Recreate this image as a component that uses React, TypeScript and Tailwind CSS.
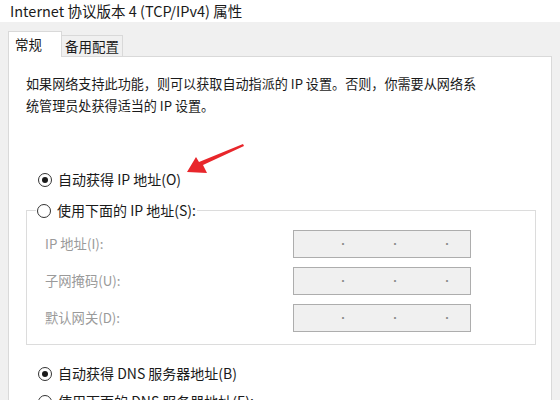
import React from "react";

const font = { fontFamily: '"Noto Sans CJK SC", "Noto Sans", sans-serif' };

const Radio = ({ checked }: { checked?: boolean }) => (
  <span className="w-[14px] h-[14px] rounded-full border border-[#333333] bg-white flex items-center justify-center flex-shrink-0">
    {checked && <span className="w-[6px] h-[6px] rounded-full bg-[#1a1a1a]" />}
  </span>
);

const RadioRow = ({ checked, label }: { checked?: boolean; label: string }) => (
  <div className="flex items-center gap-[6px] h-[20px] text-[14px] text-[#1a1a1a]">
    <Radio checked={checked} />
    <span>{label}</span>
  </div>
);

const IpField = () => (
  <div className="w-[178px] h-[28px] bg-[#f0f0f0] border border-[#adadad] flex items-center text-[#8a8a8a] text-[10px] leading-none">
    <span className="ml-[44px]">·</span>
    <span className="ml-[42px]">·</span>
    <span className="ml-[42px]">·</span>
  </div>
);

const fields = ["IP 地址(I):", "子网掩码(U):", "默认网关(D):"];

export default function App() {
  return (
    <div className="w-[560px] h-[400px] bg-[#f0f0f0] overflow-hidden flex flex-col" style={font}>
      {/* Title */}
      <div className="h-[33px] bg-white px-[10px] flex items-center text-[14.5px] text-[#1a1a1a]">
        Internet 协议版本 4 (TCP/IPv4) 属性
      </div>

      <div className="px-[8px] pt-[9px] flex-1 flex flex-col">
        {/* Tabs */}
        <div className="flex items-end h-[26px]">
          <div className="h-[26px] w-[54px] bg-white border border-[#d9d9d9] border-b-0 pl-[6px] flex items-center text-[13.5px] text-[#1a1a1a] relative z-10">
            常规
          </div>
          <div className="h-[22px] bg-[#f0f0f0] border border-[#d9d9d9] border-l-0 border-b-0 px-[3px] flex items-center text-[13.5px] text-[#1a1a1a]">
            备用配置
          </div>
        </div>

        {/* Panel */}
        <div className="flex-1 bg-white border border-[#d9d9d9] -mt-px pl-[17px] pr-[15px] pt-[16px]">
          <p className="text-[13.1px] leading-[22px] text-[#1a1a1a]">
            如果网络支持此功能，则可以获取自动指派的 IP 设置。否则，你需要从网络系
            <br />
            统管理员处获得适当的 IP 设置。
          </p>

          <div className="mt-[53px] pl-[12px]">
            <RadioRow checked label="自动获得 IP 地址(O)" />
          </div>

          <fieldset className="border border-[#dcdcdc] mt-[11px] px-0 pt-[9px] pb-[12px]">
            <legend className="ml-[9px] px-[1px] bg-white">
              <RadioRow label="使用下面的 IP 地址(S):" />
            </legend>
            <div className="flex flex-col gap-[9px] pl-[18px] pr-[64px]">
              {fields.map((f) => (
                <div key={f} className="flex items-center justify-between">
                  <span className="text-[13.3px] text-[#9a9a9a]">{f}</span>
                  <IpField />
                </div>
              ))}
            </div>
          </fieldset>

          <div className="mt-[19px] pl-[12px] flex flex-col gap-[8px]">
            <RadioRow checked label="自动获得 DNS 服务器地址(B)" />
            <RadioRow label="使用下面的 DNS 服务器地址(E):" />
          </div>
        </div>
      </div>

      {/* Red annotation arrow */}
      <svg className="absolute left-0 top-0 pointer-events-none" width="560" height="400">
        <polygon
          points="243,144 244,146 203,165 207,173 187,172 196,157 199,162"
          fill="#e8262b"
        />
      </svg>
    </div>
  );
}
